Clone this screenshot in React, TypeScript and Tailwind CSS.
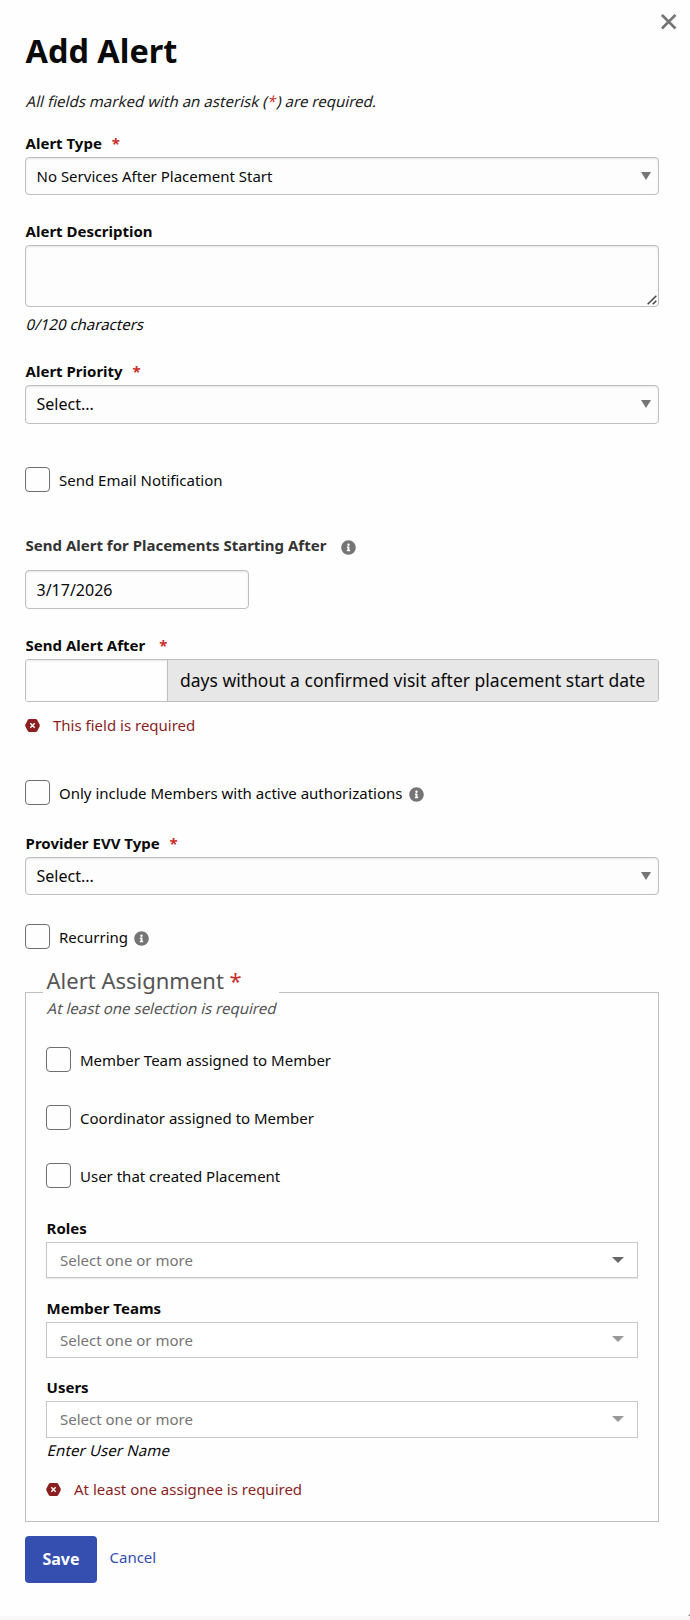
import React from "react";
import { FaInfoCircle } from "react-icons/fa";

const Star = ({ className = "ml-[6px]" }: { className?: string }) => (
  <span className={`text-[#c9302c] ${className}`}>*</span>
);

function Label({ children, className = "" }: { children: React.ReactNode; className?: string }) {
  return <div className={`h-5 pl-[0.6px] text-[15px] leading-5 font-bold whitespace-pre ${className}`}>{children}</div>;
}

function Slanted({ children, className = "" }: { children: React.ReactNode; className?: string }) {
  return (
    <div className={`h-5 w-fit origin-[0_16px] -skew-x-[14deg] pl-[0.6px] text-[15px] leading-5 whitespace-nowrap ${className}`}>
      {children}
    </div>
  );
}

function Info({ className = "" }: { className?: string }) {
  return <FaInfoCircle size={15} className={`shrink-0 text-[#757575] ${className}`} />;
}

const box =
  "rounded-[4px] border border-[#bfbfbf] bg-[#fdfdfd] shadow-[inset_0_1px_2px_rgba(10,10,10,0.1)]";

function Select({ value, className }: { value: string; className: string }) {
  return (
    <div className={`mt-1 flex items-center justify-between pr-[7px] pl-[10.5px] ${box} ${className}`}>
      <span>{value}</span>
      <svg width="10" height="8" viewBox="0 0 10 8" className="mb-px fill-[#757575]">
        <path d="M0 0H10L5 8Z" />
      </svg>
    </div>
  );
}

function Check({
  label,
  info,
  className = "",
}: {
  label: string;
  info?: string;
  className?: string;
}) {
  return (
    <label className={`flex h-[25px] items-start text-[15px] leading-5 ${className}`}>
      <span className="size-[25px] shrink-0 rounded-[4px] border border-[#6f6f6f] bg-[#fefefe]" />
      <span className="mt-[3px] ml-[9px]">{label}</span>
      {info && <Info className={`mt-[7px] ${info}`} />}
    </label>
  );
}

function Multi({ className, arrow }: { className: string; arrow: string }) {
  return (
    <div className={`mt-1 flex items-start justify-between border border-[#c8c8c8] bg-white pr-[13px] pl-[13px] text-[15px] leading-5 text-[#757575] ${className}`}>
      <span className="mt-[7px]">Select one or more</span>
      <svg width="12" height="6" viewBox="0 0 12 6" className={arrow}>
        <path d="M0 0H12L6 6Z" />
      </svg>
    </div>
  );
}

function FieldError({ children, className }: { children: string; className: string }) {
  return (
    <div className={`flex h-5 items-start text-[15px] leading-5 text-[#8b1e1e] ${className}`}>
      <svg width="15" height="13" viewBox="0 0 15 13" className="mt-1 shrink-0">
        <path
          d="M4.4 0H10.6Q11.6 0 12.1 .8L14.6 5.6Q15 6.5 14.6 7.4L12.1 12.2Q11.6 13 10.6 13H4.4Q3.4 13 2.9 12.2L.4 7.4Q0 6.5 .4 5.6L2.9 .8Q3.4 0 4.4 0Z"
          fill="#8b1e1e"
        />
        <path d="M5.3 4.3L9.7 8.7M9.7 4.3L5.3 8.7" stroke="#fff" strokeWidth="1.4" />
      </svg>
      <span className="ml-[13px]">{children}</span>
    </div>
  );
}

export default function App() {
  return (
    <div className="h-[1620px] w-[690px] overflow-hidden bg-[#fefefe] font-['Noto_Sans',sans-serif] text-[15px] text-[#0a0a0a]">
      <button aria-label="Close" className="absolute top-[14px] left-[661px]">
        <svg width="16" height="16" viewBox="0 0 16 16" stroke="#757575" strokeWidth="2.7" fill="none">
          <path d="M.9 .9L14.5 14.5M14.5 .9L.9 14.5" />
        </svg>
      </button>
      <div className="flex h-[1616px] flex-col pr-[31px] pl-[25px]">
        <h1 className="mt-[27px] h-[46px] pl-[0.6px] text-[32.4px] leading-[46px] font-bold">Add Alert</h1>
        <Slanted className="mt-[18px] tracking-[0.03px] text-[#222]">
          All fields marked with an asterisk (<Star className="mr-px" />) are required.
        </Slanted>

        <Label className="mt-[22px]">Alert Type <Star /></Label>
        <Select value="No Services After Placement Start" className="h-[38px] text-[15px]" />

        <Label className="mt-[26px]">Alert Description</Label>
        <div className={`mt-1 flex h-[62px] items-end justify-end ${box}`}>
          <svg width="10" height="10" viewBox="0 0 10 10" className="mr-[1px] mb-[1px]" stroke="#444" strokeWidth="1.5">
            <path d="M.7 9.3L9.3 .7M5.7 9.3L9.3 5.7" />
          </svg>
        </div>
        <Slanted className="mt-[7px]">0/120 characters</Slanted>

        <Label className="mt-[27px]">Alert Priority <Star /></Label>
        <Select value="Select..." className="h-[39px] pb-px text-[16px]" />

        <Check label="Send Email Notification" className="mt-[43px]" />

        <div className="mt-[43px] flex h-5 items-end">
          <Label className="text-[#333]">Send Alert for Placements Starting After</Label>
          <Info className="ml-[15px]" />
        </div>
        <div className={`mt-[15px] flex h-[39px] w-[224px] items-center pl-[10.5px] text-[16px] ${box}`}>3/17/2026</div>

        <Label className="mt-[26px]">Send Alert After <Star className="ml-[10px]" /></Label>
        <div className="mt-1 flex h-[43px] overflow-hidden rounded-[3px] border border-[#bfbfbf]">
          <div className="w-[141px] bg-[#fefefe] shadow-[inset_0_1px_2px_rgba(10,10,10,0.1)]" />
          <div className="flex flex-1 items-center border-l border-[#bfbfbf] bg-[#e7e7e7] pl-[12px] text-[17.5px] whitespace-nowrap">
            days without a confirmed visit after placement start date
          </div>
        </div>
        <FieldError className="mt-[13px]">This field is required</FieldError>

        <Check label="Only include Members with active authorizations" info="ml-[7px]" className="mt-[45px]" />

        <Label className="mt-[28px]">Provider EVV Type <Star /></Label>
        <Select value="Select..." className="h-[38px] text-[16px]" />

        <Check label="Recurring" info="ml-[6px]" className="mt-[29px]" />

        <fieldset className="mt-[16px] h-[557px] border border-[#bfbfbf] px-[20px]">
          <legend className="-ml-[3px] h-[54px] w-[236px] bg-[#fefefe] pl-[3px] text-[#555]">
            <div className="h-[30px] pl-[0.5px] text-[22px] leading-[30px]">Alert Assignment <Star className="" /></div>
            <Slanted className="mt-[3px]">At least one selection is required</Slanted>
          </legend>
          <Check label="Member Team assigned to Member" className="mt-[28px]" />
          <Check label="Coordinator assigned to Member" className="mt-[33px]" />
          <Check label="User that created Placement" className="mt-[33px]" />

          <Label className="mt-[30px]">Roles</Label>
          <Multi className="h-[36px] shadow-[0_1px_1px_rgba(0,0,0,0.08)]" arrow="mt-[14px] fill-[#666]" />
          <Label className="mt-[20px]">Member Teams</Label>
          <Multi className="h-[36px]" arrow="mt-[13px] fill-[#999]" />
          <Label className="mt-[19px]">Users</Label>
          <Multi className="h-[37px]" arrow="mt-[14px] fill-[#999]" />
          <Slanted className="mt-[2px] tracking-[0.12px]">Enter User Name</Slanted>
          <FieldError className="mt-[19px]">At least one assignee is required</FieldError>
        </fieldset>

        <div className="mt-[14px] flex h-[47px] items-start">
          <button className="h-[47px] w-[72px] rounded-[4px] bg-[#344fb0] pb-px text-[16px] font-bold text-[#fefefe]">Save</button>
          <a className="mt-[11px] ml-[12.5px] leading-5 text-[#344fb0]">Cancel</a>
        </div>
        <div className="mt-auto flex justify-end">
          <svg width="2" height="2" viewBox="0 0 2 2" className="-mr-[31px] fill-[#888]">
            <path d="M2 0V2H0Z" />
          </svg>
        </div>
      </div>
      <div className="h-1 bg-[#f8f8f8]" />
    </div>
  );
}
